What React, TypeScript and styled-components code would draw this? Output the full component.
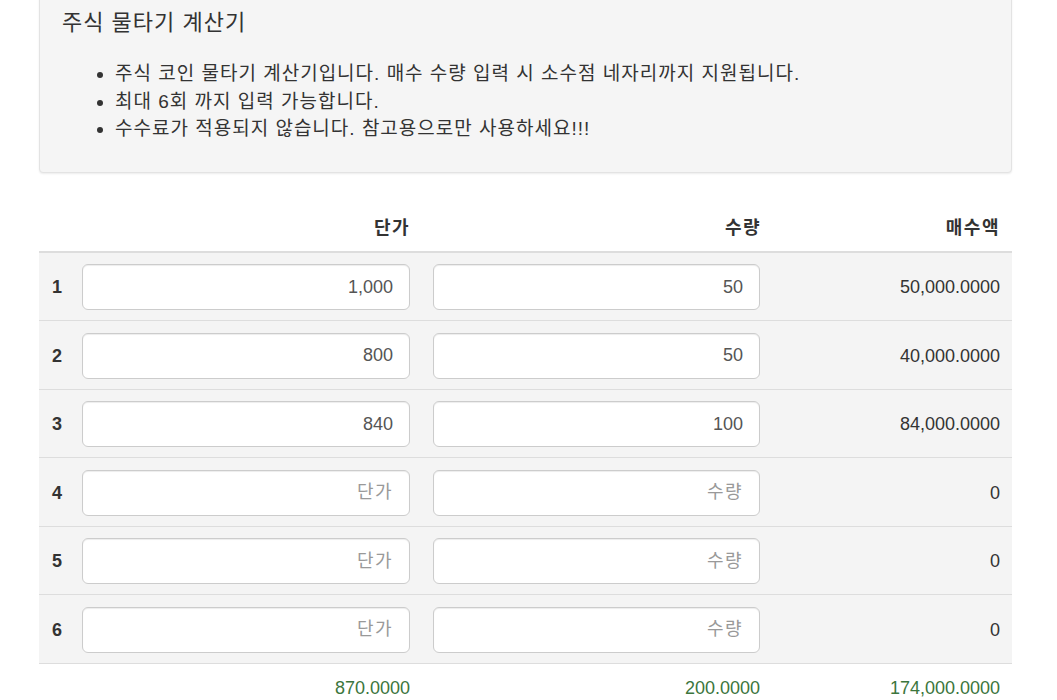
import React from "react";
import styled, { createGlobalStyle } from "styled-components";

const Global = createGlobalStyle`
  html, body { margin: 0; padding: 0; background: #fff; }
  body {
    font-family: "Liberation Sans", Arial, "Noto Sans CJK KR", sans-serif;
    color: #333;
    font-size: 18px;
  }
  * { box-sizing: border-box; }
`;

const Page = styled.div`
  width: 973px;
  margin-left: 39px;
`;

const Well = styled.div`
  margin-top: -13px;
  background: #f5f5f5;
  border: 1px solid #e3e3e3;
  border-radius: 4px;
  box-shadow: 0 1px 2px rgba(0, 0, 0, 0.08);
  padding: 19px;
  margin-bottom: 20px;
`;

const Title = styled.h4`
  margin: 0 0 21px 3px;
  font-size: 22px;
  font-weight: 400;
  line-height: 32px;
  letter-spacing: 1px;
`;

const Notes = styled.ul`
  margin: 0 0 10px 0;
  padding-left: 56px;
  font-size: 19px;
  line-height: 27.5px;
  letter-spacing: 1px;
`;

const Table = styled.table`
  width: 100%;
  border-collapse: collapse;
  table-layout: fixed;
`;

const Th = styled.th<{ $w?: number; $pl?: number; $pr?: number }>`
  ${(p) => (p.$w ? `width: ${p.$w}px;` : "")}
  padding: 22px ${(p) => p.$pr ?? 0}px 10px ${(p) => p.$pl ?? 0}px;
  text-align: right;
  font-weight: 700;
  font-size: 18px;
  line-height: 26px;
  letter-spacing: 1.5px;
  border-bottom: 2px solid #ddd;
`;

const Row = styled.tr`
  background: #f4f4f4;
`;

const Td = styled.td<{ $pl?: number; $pr?: number; $bold?: boolean; $align?: string }>`
  padding: 11.5px ${(p) => p.$pr ?? 0}px 10px ${(p) => p.$pl ?? 0}px;
  border-bottom: 1px solid #ddd;
  vertical-align: middle;
  text-align: ${(p) => p.$align ?? "right"};
  font-weight: ${(p) => (p.$bold ? 700 : 400)};
  font-size: 18px;
  line-height: 26px;
`;

const Input = styled.input`
  display: block;
  width: 100%;
  height: 46px;
  padding: 10px 16px;
  font-family: inherit;
  font-size: 18px;
  line-height: 1.33;
  color: #555;
  text-align: right;
  background: #fff;
  border: 1px solid #ccc;
  border-radius: 6px;
  box-shadow: inset 0 1px 1px rgba(0, 0, 0, 0.075);
  outline: none;
  &::placeholder { color: #999; letter-spacing: 1.5px; }
`;

const Foot = styled.td<{ $pl?: number; $pr?: number }>`
  padding: 11px ${(p) => p.$pr ?? 0}px 8px ${(p) => p.$pl ?? 0}px;
  text-align: right;
  color: #3c763d;
  font-size: 18px;
  line-height: 26px;
`;

const rows = [
  { p: "1,000", q: "50", t: "50,000.0000" },
  { p: "800", q: "50", t: "40,000.0000" },
  { p: "840", q: "100", t: "84,000.0000" },
  { p: "", q: "", t: "0" },
  { p: "", q: "", t: "0" },
  { p: "", q: "", t: "0" },
];

export default function App() {
  return (
    <>
      <Global />
      <Page>
        <Well>
          <Title>주식 물타기 계산기</Title>
          <Notes>
            <li>주식 코인 물타기 계산기입니다. 매수 수량 입력 시 소수점 네자리까지 지원됩니다.</li>
            <li>최대 6회 까지 입력 가능합니다.</li>
            <li>수수료가 적용되지 않습니다. 참고용으로만 사용하세요!!!</li>
          </Notes>
        </Well>
        <Table>
          <thead>
            <tr>
              <Th $w={43} />
              <Th $w={336} $pr={8}>단가</Th>
              <Th $w={350} $pl={15} $pr={7}>수량</Th>
              <Th $pr={12}>매수액</Th>
            </tr>
          </thead>
          <tbody>
            {rows.map((r, i) => (
              <Row key={i}>
                <Td $pl={13} $bold $align="left">{i + 1}</Td>
                <Td $pr={8}>
                  <Input defaultValue={r.p} placeholder="단가" />
                </Td>
                <Td $pl={15} $pr={8}>
                  <Input defaultValue={r.q} placeholder="수량" />
                </Td>
                <Td $pr={12}>{r.t}</Td>
              </Row>
            ))}
            <tr>
              <Foot />
              <Foot $pr={8}>870.0000</Foot>
              <Foot $pl={15} $pr={8}>200.0000</Foot>
              <Foot $pr={12}>174,000.0000</Foot>
            </tr>
          </tbody>
        </Table>
      </Page>
    </>
  );
}
